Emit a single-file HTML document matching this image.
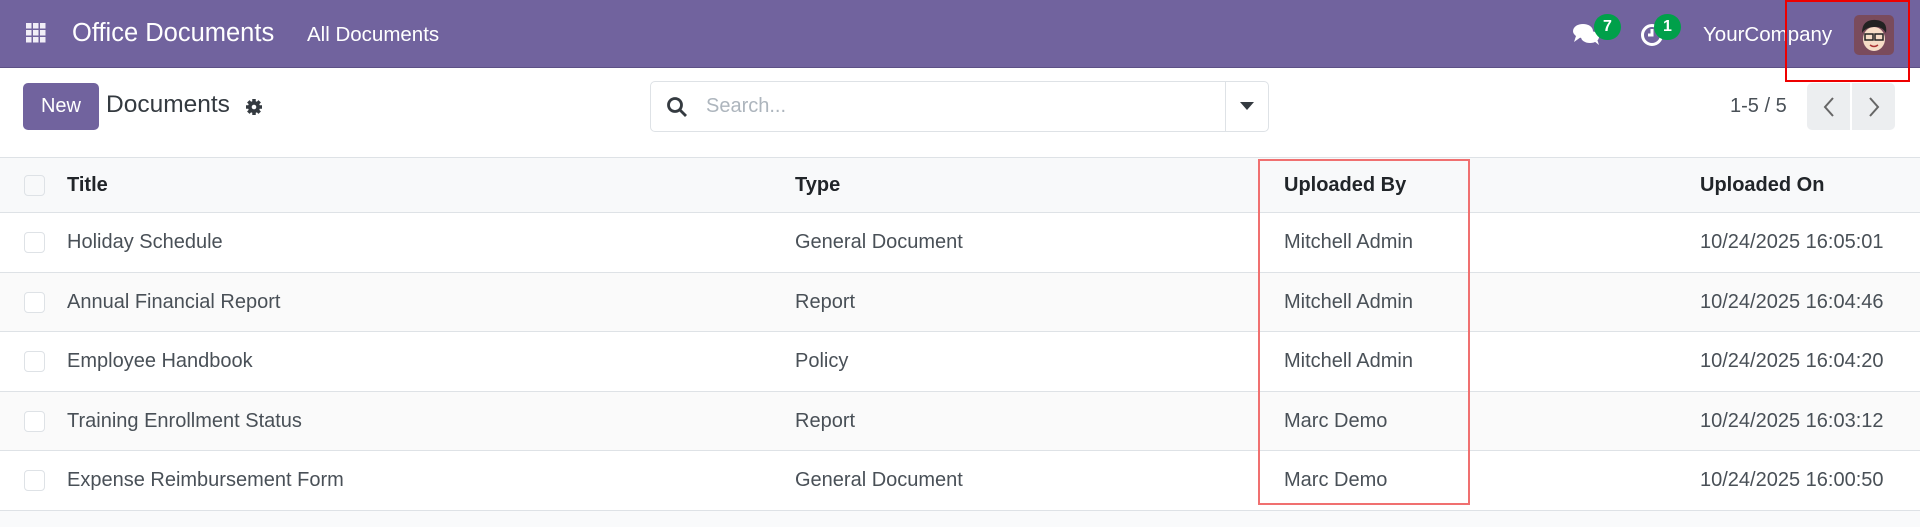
<!DOCTYPE html>
<html><head><meta charset="utf-8"><style>
*{box-sizing:border-box;margin:0;padding:0}
body{width:1920px;height:527px;overflow:hidden;background:#f9fafb;font-family:"Liberation Sans",sans-serif;color:#495057;position:relative}
.a{position:absolute;white-space:nowrap}
.nav{position:absolute;left:0;top:0;width:1920px;height:68px;background:#71639e;border-bottom:1px solid #5d5186}
.cp{position:absolute;left:0;top:68px;width:1920px;height:89px;background:#fff}
.row{position:absolute;left:0;width:1920px;border-bottom:1px solid #dee2e6;background:#fff}
.row.alt{background:#fafafa}
.cb{position:absolute;left:24px;width:21px;height:21px;border:1px solid #dee2e6;border-radius:4px;background:#fff}
.t{position:absolute;font-size:20px;color:#495057}
.h{font-weight:bold;color:#212529}
</style></head><body>
<div class="nav">
 <svg class="a" style="left:26px;top:23px" width="20" height="20" viewBox="0 0 20 20" fill="#f1eef7">
  <rect x="0" y="0" width="5.5" height="5.5"/><rect x="7" y="0" width="5.5" height="5.5"/><rect x="14" y="0" width="5.5" height="5.5"/>
  <rect x="0" y="7" width="5.5" height="5.5"/><rect x="7" y="7" width="5.5" height="5.5"/><rect x="14" y="7" width="5.5" height="5.5"/>
  <rect x="0" y="14" width="5.5" height="5.5"/><rect x="7" y="14" width="5.5" height="5.5"/><rect x="14" y="14" width="5.5" height="5.5"/>
 </svg>
 <div class="a" style="left:72px;top:19px;font-size:25.5px;color:#fff">Office Documents</div>
 <div class="a" style="left:307px;top:23px;font-size:20.5px;color:#fff">All Documents</div>
 <svg class="a" style="left:1572px;top:22px" width="30" height="24" viewBox="0 0 30 24" fill="#fff">
  <ellipse cx="11" cy="9" rx="10" ry="7"/><path d="M4 14 L2 20 L9 15Z"/>
  <ellipse cx="18" cy="15" rx="9" ry="6"/><path d="M22 19 L27 23 L25 17Z"/>
 </svg>
 <div class="a" style="left:1594px;top:14px;width:27px;height:26px;border-radius:13px;background:#00a04a;color:#fff;font-size:16px;font-weight:bold;text-align:center;line-height:26px">7</div>
 <svg class="a" style="left:1640px;top:23px" width="24" height="24" viewBox="0 0 24 24" fill="none" stroke="#fff" stroke-width="3"><circle cx="12" cy="12" r="9.5"/><path d="M12 6v6h-4"/></svg>
 <div class="a" style="left:1654px;top:14px;width:27px;height:26px;border-radius:13px;background:#00a04a;color:#fff;font-size:16px;font-weight:bold;text-align:center;line-height:26px">1</div>
 <div class="a" style="left:1703px;top:23px;font-size:20.5px;color:#fff">YourCompany</div>
 <svg class="a" style="left:1854px;top:15px;border-radius:5px" width="40" height="40" viewBox="0 0 40 40">
  <rect width="40" height="40" fill="#7a4b5c"/>
  <ellipse cx="20" cy="24" rx="11" ry="12" fill="#f6dcc6"/>
  <path d="M8 18 Q8 4 22 5 Q34 6 32 18 Q28 11 20 12 Q12 12 8 18Z" fill="#222"/>
  <rect x="11" y="19" width="8" height="6" fill="none" stroke="#222" stroke-width="1.5"/>
  <rect x="21" y="19" width="8" height="6" fill="none" stroke="#222" stroke-width="1.5"/>
  <path d="M16 30 Q20 33 24 30" stroke="#a33" stroke-width="1.5" fill="none"/>
 </svg>
</div>
<div style="position:absolute;left:1785px;top:0;width:125px;height:82px;border:2px solid #e00;z-index:5"></div>
<div class="cp">
 <div class="a" style="left:23px;top:15px;width:76px;height:47px;background:#71639e;border-radius:5px;color:#fff;font-size:20px;text-align:center;line-height:47px">New</div>
 <div class="a" style="left:106px;top:23px;font-size:24.5px;color:#343a40">Documents</div>
 <svg class="a" style="left:245px;top:30px" width="18" height="18" viewBox="0 0 18 18"><g fill="#343a40"><circle cx="9" cy="9" r="6"/><g stroke="#343a40" stroke-width="3.5"><path d="M9 1v16M1 9h16M3.3 3.3l11.4 11.4M14.7 3.3L3.3 14.7"/></g></g><circle cx="9" cy="9" r="2.3" fill="#fff"/></svg>
 <div class="a" style="left:650px;top:13px;width:619px;height:51px;border:1px solid #dee2e6;border-radius:5px;background:#fff">
  <svg class="a" style="left:15px;top:14px" width="22" height="22" viewBox="0 0 22 22" fill="none" stroke="#343a40" stroke-width="2.8"><circle cx="9" cy="9" r="6.5"/><path d="M14 14l6 6"/></svg>
  <div class="a" style="left:55px;top:13px;font-size:20px;color:#adb5bd">Search...</div>
  <div class="a" style="left:574px;top:0;width:1px;height:49px;background:#dee2e6"></div>
  <svg class="a" style="left:589px;top:20px" width="14" height="9" viewBox="0 0 14 9"><path d="M0 0h14L7 8Z" fill="#343a40"/></svg>
 </div>
 <div class="a" style="left:1730px;top:27px;font-size:20px;color:#495057">1-5 / 5</div>
 <div class="a" style="left:1807px;top:15px;width:88px;height:47px;background:#eceef0;border-radius:5px">
  <div class="a" style="left:43px;top:0;width:2px;height:47px;background:#fff"></div>
  <svg class="a" style="left:15px;top:14px" width="14" height="20" viewBox="0 0 14 20" fill="none" stroke="#666" stroke-width="2"><path d="M11 1L3 10l8 9"/></svg>
  <svg class="a" style="left:60px;top:14px" width="14" height="20" viewBox="0 0 14 20" fill="none" stroke="#666" stroke-width="2"><path d="M3 1l8 9-8 9"/></svg>
 </div>
</div>
<div class="row" style="top:157px;height:56px;background:#f8f9fa;border-top:1px solid #dee2e6">
 <div class="cb" style="top:17px;background:#f8f9fa"></div>
 <div class="t h" style="left:67px;top:16px">Title</div>
 <div class="t h" style="left:795px;top:16px">Type</div>
 <div class="t h" style="left:1284px;top:16px">Uploaded By</div>
 <div class="t h" style="left:1700px;top:16px">Uploaded On</div>
</div>
<div class="row" style="top:213px;height:60px"><div class="cb" style="top:19px"></div><div class="t" style="left:67px;top:18px">Holiday Schedule</div><div class="t" style="left:795px;top:18px">General Document</div><div class="t" style="left:1284px;top:18px">Mitchell Admin</div><div class="t" style="left:1700px;top:18px">10/24/2025 16:05:01</div></div>
<div class="row alt" style="top:273px;height:59px"><div class="cb" style="top:19px"></div><div class="t" style="left:67px;top:18px">Annual Financial Report</div><div class="t" style="left:795px;top:18px">Report</div><div class="t" style="left:1284px;top:18px">Mitchell Admin</div><div class="t" style="left:1700px;top:18px">10/24/2025 16:04:46</div></div>
<div class="row" style="top:332px;height:60px"><div class="cb" style="top:19px"></div><div class="t" style="left:67px;top:18px">Employee Handbook</div><div class="t" style="left:795px;top:18px">Policy</div><div class="t" style="left:1284px;top:18px">Mitchell Admin</div><div class="t" style="left:1700px;top:18px">10/24/2025 16:04:20</div></div>
<div class="row alt" style="top:392px;height:59px"><div class="cb" style="top:19px"></div><div class="t" style="left:67px;top:18px">Training Enrollment Status</div><div class="t" style="left:795px;top:18px">Report</div><div class="t" style="left:1284px;top:18px">Marc Demo</div><div class="t" style="left:1700px;top:18px">10/24/2025 16:03:12</div></div>
<div class="row" style="top:451px;height:60px"><div class="cb" style="top:19px"></div><div class="t" style="left:67px;top:18px">Expense Reimbursement Form</div><div class="t" style="left:795px;top:18px">General Document</div><div class="t" style="left:1284px;top:18px">Marc Demo</div><div class="t" style="left:1700px;top:18px">10/24/2025 16:00:50</div></div>
<div style="position:absolute;left:1258px;top:159px;width:212px;height:346px;border:2px solid #f07070;z-index:5"></div>
</body></html>
